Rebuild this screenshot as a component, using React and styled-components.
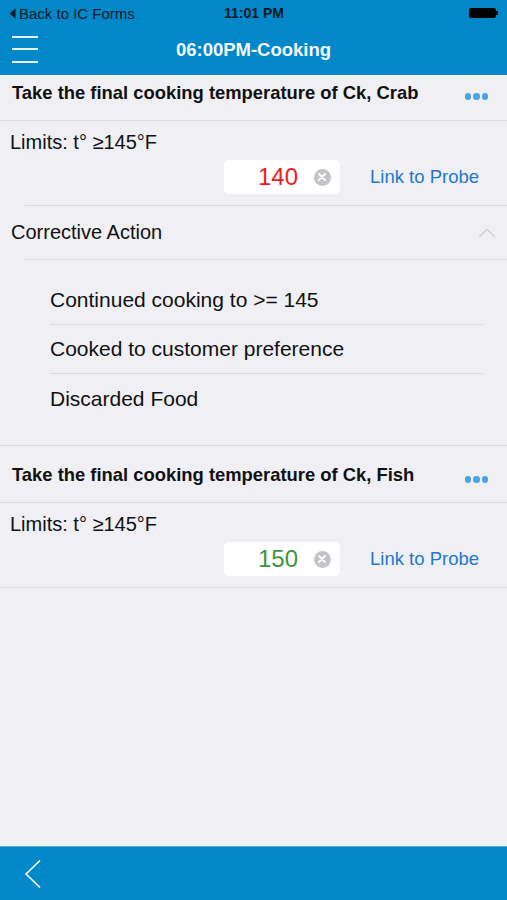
import React from "react";
import styled, { createGlobalStyle } from "styled-components";

const Global = createGlobalStyle`
  html, body { margin: 0; padding: 0; background: #efeff4; }
  body { font-family: "Liberation Sans", Arial, sans-serif; }
  * { box-sizing: border-box; }
`;

const Screen = styled.div`
  width: 507px;
  height: 900px;
  display: flex;
  flex-direction: column;
  background: #efeff4;
  overflow: hidden;
`;

const TopBar = styled.div`
  background: #0288c9;
  display: flex;
  flex-direction: column;
`;

const StatusBar = styled.div`
  height: 28px;
  display: grid;
  grid-template-columns: 1fr auto 1fr;
  align-items: center;
  padding: 0 8px 2px 9px;
  color: #0b1a26;
  font-size: 15px;
`;

const BackLink = styled.div`
  display: flex;
  align-items: center;
  gap: 3px;
`;

const Clock = styled.div`
  font-weight: bold;
  font-size: 14px;
  color: #0b1a26;
`;

const Battery = styled.div`
  justify-self: end;
  display: flex;
  align-items: center;
  margin-right: 1px;
`;

const BatteryBody = styled.div`
  width: 27px;
  height: 10px;
  border-radius: 2.5px;
  background: #000;
`;

const BatteryNub = styled.div`
  width: 2px;
  height: 4px;
  background: #000;
  border-radius: 0 1px 1px 0;
`;

const NavBar = styled.div`
  height: 47px;
  display: grid;
  grid-template-columns: 1fr auto 1fr;
  align-items: center;
  padding: 0 12px;
`;

const Hamburger = styled.div`
  width: 26px;
  display: flex;
  flex-direction: column;
  gap: 10.5px;
  margin-top: -5px;
  span {
    display: block;
    height: 2px;
    background: #e8f4fb;
  }
`;

const NavTitle = styled.div`
  color: #f4f9fc;
  font-weight: bold;
  font-size: 18.5px;
  margin-top: -3px;
`;

const Content = styled.div`
  flex: 1;
  display: flex;
  flex-direction: column;
`;

const QuestionHeader = styled.div`
  height: ${(p) => p.$h}px;
  padding: ${(p) => p.$pt}px 19px 0 12px;
  display: flex;
  justify-content: space-between;
  align-items: flex-start;
  border-bottom: 1px solid #dcdce0;
`;

const QuestionText = styled.div`
  font-weight: bold;
  font-size: 18.4px;
  line-height: 21px;
  color: #111;
`;

const Dots = styled.div`
  display: flex;
  gap: 2px;
  margin-top: ${(p) => p.$dy}px;
  span {
    width: 6.5px;
    height: 6.5px;
    border-radius: 50%;
    background: #4ea4df;
  }
`;

const LimitBlock = styled.div`
  padding: 9px 0 11px 0;
  display: flex;
  flex-direction: column;
  gap: 6px;
`;

const LimitText = styled.div`
  font-size: 20px;
  line-height: 24px;
  color: #111;
  padding-left: 10px;
`;

const Divider = styled.div`
  height: 1px;
  background: #dcdce0;
  margin-left: ${(p) => p.$inset || 0}px;
  margin-right: ${(p) => p.$right || 0}px;
`;

const InputRow = styled.div`
  display: flex;
  align-items: center;
  justify-content: flex-end;
  padding-right: 28px;
  gap: 30px;
`;

const ValueBox = styled.div`
  width: 116px;
  height: 34px;
  background: #fff;
  border-radius: 5px;
  display: flex;
  align-items: center;
  justify-content: flex-end;
  padding-right: 9px;
  gap: 16px;
`;

const Value = styled.span`
  font-size: 24px;
  color: ${(p) => p.$color};
`;

const ClearBtn = styled.span`
  width: 17px;
  height: 17px;
  border-radius: 50%;
  background: #c4c4c8;
  display: flex;
  align-items: center;
  justify-content: center;
`;

const ProbeLink = styled.span`
  font-size: 18.5px;
  color: #1f78cc;
`;

const ActionHeader = styled.div`
  height: 53px;
  display: flex;
  align-items: center;
  justify-content: space-between;
  padding: 0 11px 0 11px;
`;

const ActionTitle = styled.span`
  font-size: 20px;
  color: #111;
`;

const OptionList = styled.div`
  padding: 16px 24px 22px 50px;
  display: flex;
  flex-direction: column;
`;

const Option = styled.div`
  height: 49px;
  display: flex;
  align-items: center;
  font-size: 21px;
  color: #111;
  border-bottom: ${(p) => (p.$last ? "none" : "1px solid #dcdce0")};
`;

const BottomBar = styled.div`
  height: 54px;
  background: #0288c9;
  border-top: 1px solid #4eb0de;
  display: flex;
  align-items: center;
  padding-left: 24px;
`;

const Clear = () => (
  <ClearBtn>
    <svg width="8" height="8" viewBox="0 0 8 8">
      <path d="M1 1L7 7M7 1L1 7" stroke="#fff" strokeWidth="1.8" strokeLinecap="round" />
    </svg>
  </ClearBtn>
);

const Limit = ({ value, color }) => (
  <LimitBlock>
    <LimitText>Limits: t° ≥145°F</LimitText>
    <InputRow>
      <ValueBox>
        <Value $color={color}>{value}</Value>
        <Clear />
      </ValueBox>
      <ProbeLink>Link to Probe</ProbeLink>
    </InputRow>
  </LimitBlock>
);

const MoreDots = ({ dy }) => (
  <Dots $dy={dy}>
    <span />
    <span />
    <span />
  </Dots>
);

export default function App() {
  return (
    <Screen>
      <Global />
      <TopBar>
        <StatusBar>
          <BackLink>
            <svg width="7" height="11" viewBox="0 0 7 11">
              <path d="M6.5 0.5L0.5 5.5L6.5 10.5Z" fill="#0b1a26" />
            </svg>
            Back to IC Forms
          </BackLink>
          <Clock>11:01 PM</Clock>
          <Battery>
            <BatteryBody />
            <BatteryNub />
          </Battery>
        </StatusBar>
        <NavBar>
          <Hamburger>
            <span />
            <span />
            <span />
          </Hamburger>
          <NavTitle>06:00PM-Cooking</NavTitle>
          <span />
        </NavBar>
      </TopBar>
      <Content>
        <QuestionHeader $h={46} $pt={7}>
          <QuestionText>Take the final cooking temperature of Ck, Crab</QuestionText>
          <MoreDots dy={11} />
        </QuestionHeader>
        <Limit value="140" color="#ee1c22" />
        <Divider $inset={25} />
        <ActionHeader>
          <ActionTitle>Corrective Action</ActionTitle>
          <svg width="18" height="10" viewBox="0 0 18 10">
            <path d="M1 9L9 1.5L17 9" fill="none" stroke="#cfcfd3" strokeWidth="1.5" />
          </svg>
        </ActionHeader>
        <Divider $inset={25} />
        <OptionList>
          <Option>Continued cooking to &gt;= 145</Option>
          <Option>Cooked to customer preference</Option>
          <Option $last>Discarded Food</Option>
        </OptionList>
        <Divider />
        <QuestionHeader $h={57} $pt={18}>
          <QuestionText>Take the final cooking temperature of Ck, Fish</QuestionText>
          <MoreDots dy={12} />
        </QuestionHeader>
        <Limit value="150" color="#3c963c" />
        <Divider />
      </Content>
      <BottomBar>
        <svg width="18" height="30" viewBox="0 0 18 30">
          <path d="M16 1.5L2 15L16 28.5" fill="none" stroke="#fff" strokeWidth="1.6" />
        </svg>
      </BottomBar>
    </Screen>
  );
}
